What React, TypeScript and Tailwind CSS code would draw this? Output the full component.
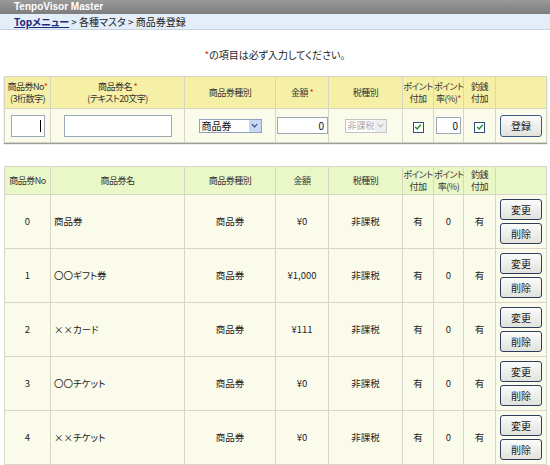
import React from 'react';

const font = { fontFamily: '"MS PGothic", "Noto Sans CJK JP", sans-serif', fontFeatureSettings: '"palt"' };

const cols = ['w-[46px]', 'w-[134px]', 'w-[91px]', 'w-[53px]', 'w-[74px]', 'w-[31px]', 'w-[30px]', 'w-[32px]', 'w-[51px]'];

const rows = [
  { no: '0', name: '商品券', amount: '¥0' },
  { no: '1', name: '〇〇ギフト券', amount: '¥1,000' },
  { no: '2', name: '××カード', amount: '¥111' },
  { no: '3', name: '〇〇チケット', amount: '¥0' },
  { no: '4', name: '××チケット', amount: '¥0' },
];

const Req = () => <span className="text-[#e03020]">*</span>;

const Btn: React.FC<{ label: string; className?: string }> = ({ label, className = '' }) => (
  <button
    className={`h-[21px] w-[42px] rounded-[3px] border border-[#2c3e5c] bg-gradient-to-b from-[#fbfbfb] to-[#e2e2dc] text-[10px] leading-none text-[#222] ${className}`}
  >
    {label}
  </button>
);

const Check = () => (
  <span className="inline-flex h-[11px] w-[11px] items-center justify-center border border-[#2c4f7c] bg-white align-middle">
    <svg viewBox="0 0 10 10" className="h-[8px] w-[8px]">
      <path d="M1.5 5 L4 7.5 L8.5 2" fill="none" stroke="#1f8a2a" strokeWidth="1.8" />
    </svg>
  </span>
);

export default function App() {
  const th = 'border border-[#d6d6c6] font-normal text-center leading-[12px] p-0 whitespace-nowrap tracking-[-0.5px]';
  const td = 'border border-[#d6d6c6] text-center p-0 whitespace-nowrap';

  return (
    <div className="w-[550px] h-[465px] bg-white text-[10px] text-[#333] overflow-hidden" style={font}>
      <div className="h-[14px] bg-gradient-to-b from-[#9a9a9a] to-[#7d7d7d] pl-[14px] text-[10px] font-bold leading-[14px] text-white" style={{ fontFamily: '"Liberation Sans", sans-serif' }}>
        TenpoVisor Master
      </div>
      <div className="h-[16px] border-b border-[#c8d4e2] bg-[#e4eef8] pl-[14px] text-[10px] leading-[16px] text-[#222]">
        <span className="font-bold text-[#1a2a7a] underline">Topメニュー</span> &gt; 各種マスタ &gt; 商品券登録
      </div>

      <div className="pt-[19px] pb-[15px] text-center text-[10px] leading-[12px] text-[#222]">
        <span className="text-[#e03020]">*</span>の項目は必ず入力してください。
      </div>

      <div className="px-[4px]">
        <table className="table-fixed border-collapse w-[542px] shadow-[0_1px_1px_#9a9a9a]">
          <colgroup>
            {cols.map((c, i) => <col key={i} className={c} />)}
          </colgroup>
          <thead>
            <tr className="h-[32px] bg-[#f6f0a6] text-[9px]">
              <th className={th}>商品券No<Req /><br />(3桁数字)</th>
              <th className={th}>商品券名 <Req /><br />(テキスト20文字)</th>
              <th className={th}>商品券種別</th>
              <th className={th}>金額 <Req /></th>
              <th className={th}>税種別</th>
              <th className={th}>ポイント<br />付加</th>
              <th className={th}>ポイント<br />率(%)<Req /></th>
              <th className={th}>釣銭<br />付加</th>
              <th className={th}></th>
            </tr>
          </thead>
          <tbody>
            <tr className="h-[34px] bg-[#fbfbeb]">
              <td className={td}>
                <div className="mx-auto flex h-[22px] w-[34px] items-center justify-end border border-[#9aa8b8] bg-white pr-[3px]">
                  <span className="h-[12px] w-px bg-black" />
                </div>
              </td>
              <td className={td}>
                <div className="mx-auto h-[22px] w-[108px] border border-[#9aa8b8] bg-white" />
              </td>
              <td className={td}>
                <div className="mx-auto flex h-[14px] w-[63px] items-center justify-between border border-[#8ea2bc] bg-white pl-[2px] text-[#111]">
                  <span>商品券</span>
                  <span className="flex h-[12px] w-[12px] items-center justify-center bg-[#c8d8f0]">
                    <svg viewBox="0 0 8 8" className="h-[7px] w-[7px]"><path d="M1 2.5 L4 5.5 L7 2.5" fill="none" stroke="#2a4a8a" strokeWidth="1.4" /></svg>
                  </span>
                </div>
              </td>
              <td className={td}>
                <div className="ml-[1px] flex h-[17px] w-[51px] items-center justify-end border border-[#9aa8b8] bg-white pr-[3px] text-[#111]">0</div>
              </td>
              <td className={td}>
                <div className="mx-auto flex h-[14px] w-[42px] items-center justify-between border border-[#c4c4c4] bg-white pl-[2px] text-[9px] text-[#aaa]">
                  <span>非課税</span>
                  <span className="flex h-[12px] w-[11px] items-center justify-center bg-[#eee]">
                    <svg viewBox="0 0 8 8" className="h-[7px] w-[7px]"><path d="M1 2.5 L4 5.5 L7 2.5" fill="none" stroke="#bbb" strokeWidth="1.4" /></svg>
                  </span>
                </div>
              </td>
              <td className={td}><Check /></td>
              <td className={td}>
                <div className="mx-auto flex h-[17px] w-[25px] items-center justify-end border border-[#9aa8b8] bg-white pr-[2px] text-[#111]">0</div>
              </td>
              <td className={td}><Check /></td>
              <td className={td}><Btn label="登録" className="h-[22px] w-[40px] border-[#3a5a8a]" /></td>
            </tr>
          </tbody>
        </table>

        <table className="mt-[23px] table-fixed border-collapse w-[542px]">
          <colgroup>
            {cols.map((c, i) => <col key={i} className={c} />)}
          </colgroup>
          <thead>
            <tr className="h-[28px] bg-[#eaf7c6] text-[9px]">
              <th className={th}>商品券No</th>
              <th className={th}>商品券名</th>
              <th className={th}>商品券種別</th>
              <th className={th}>金額</th>
              <th className={th}>税種別</th>
              <th className={th}>ポイント<br />付加</th>
              <th className={th}>ポイント<br />率(%)</th>
              <th className={th}>釣銭<br />付加</th>
              <th className={th}></th>
            </tr>
          </thead>
          <tbody>
            {rows.map((r) => (
              <tr key={r.no} className="h-[54px] bg-[#fbfbeb] text-[9.5px] text-[#222]">
                <td className={td}>{r.no}</td>
                <td className={`${td} text-left pl-[3px]`}>{r.name}</td>
                <td className={td}>商品券</td>
                <td className={td}>{r.amount}</td>
                <td className={td}>非課税</td>
                <td className={td}>有</td>
                <td className={td}>0</td>
                <td className={td}>有</td>
                <td className={td}>
                  <div className="flex flex-col items-center gap-[3px]">
                    <Btn label="変更" />
                    <Btn label="削除" />
                  </div>
                </td>
              </tr>
            ))}
          </tbody>
        </table>
      </div>
    </div>
  );
}
